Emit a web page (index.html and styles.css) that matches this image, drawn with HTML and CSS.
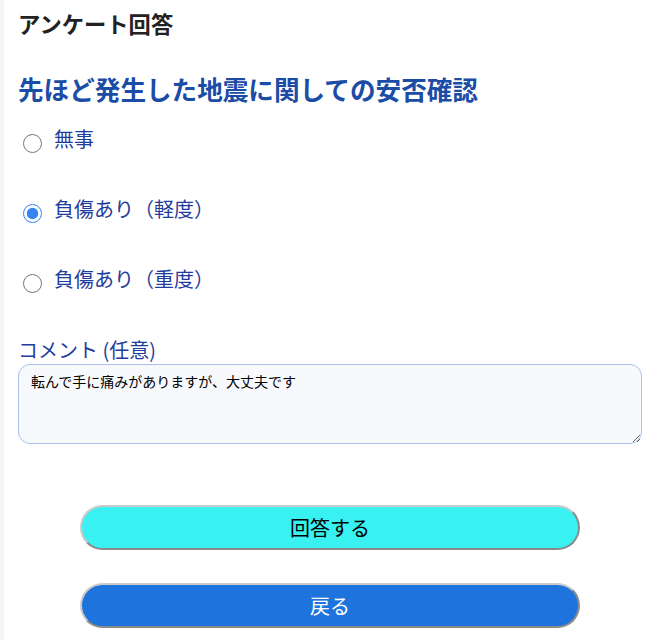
FILE: index.html
```html
<!DOCTYPE html>
<html lang="ja">
<head>
<meta charset="utf-8">
<title>アンケート回答</title>
<link rel="stylesheet" href="styles.css">
</head>
<body>
<div class="page">
  <h1 class="title">アンケート回答</h1>
  <h2 class="question">先ほど発生した地震に関しての安否確認</h2>
  <div class="options">
    <label class="option"><input type="radio" name="status" class="radio"><span>無事</span></label>
    <label class="option"><input type="radio" name="status" class="radio" checked><span>負傷あり（軽度）</span></label>
    <label class="option"><input type="radio" name="status" class="radio"><span>負傷あり（重度）</span></label>
  </div>
  <label class="comment-label" for="comment">コメント (任意)</label>
  <textarea id="comment" class="comment">転んで手に痛みがありますが、大丈夫です</textarea>
  <div class="actions">
    <button class="btn btn-submit" type="button">回答する</button>
    <button class="btn btn-back" type="button">戻る</button>
  </div>
</div>
</body>
</html>
```
FILE: styles.css
```css
html, body {
  margin: 0;
  padding: 0;
  background: #ffffff;
}
body {
  font-family: "Noto Sans CJK JP", "Noto Sans", sans-serif;
}
.page {
  box-sizing: border-box;
  min-height: 100vh;
  border-left: 4px solid #f4f4f4;
  padding: 8px 4px 0 14px;
  display: flex;
  flex-direction: column;
}
.title {
  margin: 0;
  font-size: 22.3px;
  line-height: 30px;
  font-weight: 700;
  color: #222222;
}
.question {
  margin: 33px 0 0;
  font-size: 25.6px;
  line-height: 36px;
  font-weight: 700;
  color: #1b4ca6;
}
.options {
  margin-top: 12px;
  display: flex;
  flex-direction: column;
  gap: 30px;
}
.option {
  display: flex;
  align-items: center;
  height: 40px;
  font-size: 20px;
  line-height: 40px;
  color: #1f3d9c;
}
.radio {
  width: 19px;
  height: 19px;
  margin: 8px 12px 0 5px;
  accent-color: #3584f0;
}
.comment-label {
  margin-top: 37px;
  font-size: 20px;
  line-height: 28px;
  color: #1f3d9c;
}
.comment {
  box-sizing: border-box;
  width: 100%;
  height: 80px;
  margin: 0;
  padding: 6px 12px;
  border: 1px solid #a9c1ec;
  border-radius: 12px;
  background: #f8f9fc;
  font-family: "Noto Sans CJK JP", sans-serif;
  font-size: 14px;
  line-height: 20px;
  color: #000000;
}
.actions {
  margin-top: 61px;
  display: flex;
  flex-direction: column;
  align-items: center;
  gap: 33px;
}
.btn {
  box-sizing: border-box;
  width: 500px;
  height: 45px;
  border-width: 2px;
  border-style: solid;
  border-color: #cbcbcb #8a8a8a #8a8a8a #cbcbcb;
  border-radius: 23px;
  font-family: "Noto Sans CJK JP", sans-serif;
  font-size: 20px;
  line-height: 1;
  padding: 0;
}
.btn-submit {
  background: #38f1f0;
  color: #000000;
}
.btn-back {
  background: #1e74dc;
  color: #ffffff;
}
```
